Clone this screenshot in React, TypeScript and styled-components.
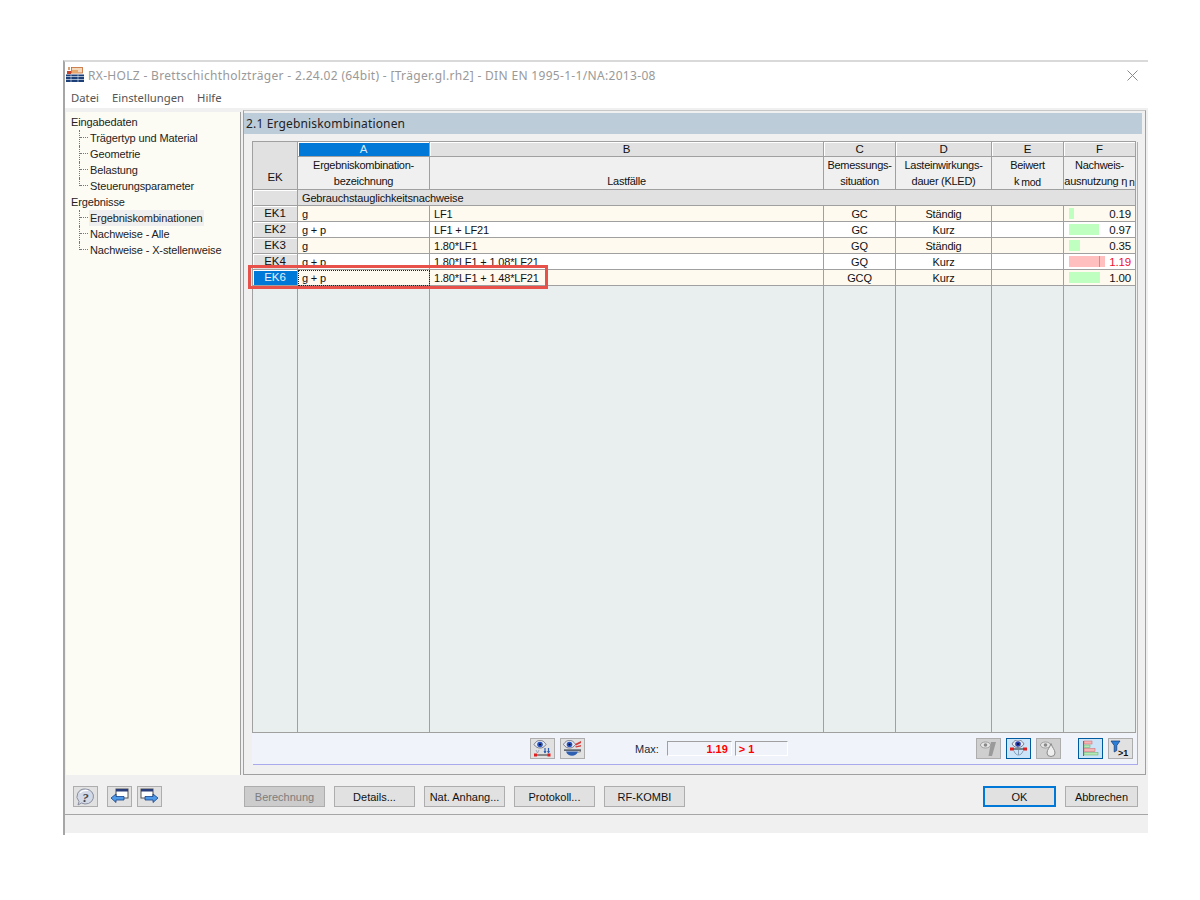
import styled, { createGlobalStyle } from 'styled-components'

const Global = createGlobalStyle`
  html, body { margin: 0; padding: 0; background: #fff; }
  body { font-family: "Liberation Sans", Arial, sans-serif; font-size: 11px; color: #111; }
`

const Page = styled.div`
  width: 1200px;
  height: 900px;
  padding: 60px 0 0 63px;
  box-sizing: border-box;
`
const Win = styled.div`
  width: 1085px;
  height: 775px;
  box-sizing: border-box;
  border-top: 2px solid #d9d9d9;
  border-left: 2px solid #a6a6a6;
  display: flex;
  flex-direction: column;
  background: #f0f0f0;
`
const TitleBar = styled.div`
  height: 26px;
  flex: none;
  background: #fff;
  display: flex;
  align-items: center;
  padding: 0 10px 0 1px;
  gap: 4px;
  font-family: "Noto Sans", sans-serif;
  font-size: 12px;
  letter-spacing: 0.32px;
  color: #999;
`
const TitleText = styled.span`
  flex: 1;
  white-space: nowrap;
`
const MenuBar = styled.div`
  height: 20px;
  flex: none;
  background: #fff;
  display: flex;
  align-items: center;
  gap: 13px;
  padding: 0 0 2px 6px;
  box-sizing: border-box;
  font-family: "Noto Sans", sans-serif;
  font-size: 11.3px;
  color: #555;
`
const Body = styled.div`
  height: 667px;
  flex: none;
  box-sizing: border-box;
  display: flex;
  padding: 2px 2px 0 1px;
  gap: 2px;
`
const Tree = styled.div`
  width: 175px;
  flex: none;
  margin-top: 2px;
  box-sizing: border-box;
  padding: 2px 0 0 5px;
  background: #fdfcf4;
  border-right: 1px solid #a0a0a0;
  color: #222;
  font-size: 11px;
  letter-spacing: -0.12px;
`
const TreeHead = styled.div`
  height: 16px;
  line-height: 16px;
`
const TreeKids = styled.div`
  margin-left: 8px;
`
const TreeRow = styled.div`
  display: flex;
  height: 16px;
  line-height: 16px;
`
const Connector = styled.span<{ $last?: boolean }>`
  width: 10px;
  height: ${(p) => (p.$last ? '8px' : '16px')};
  flex: none;
  border-left: 1px dotted #777;
  box-sizing: border-box;
  position: relative;
  &::after {
    content: '';
    position: absolute;
    left: 0;
    top: 7px;
    width: 8px;
    border-top: 1px dotted #777;
  }
`
const TreeLabel = styled.span<{ $sel?: boolean }>`
  padding: 0 2px 0 1px;
  white-space: nowrap;
  background: ${(p) => (p.$sel ? '#efefef' : 'transparent')};
`
const Panel = styled.div`
  flex: 1;
  box-sizing: border-box;
  border: 1px solid #a0a0a0;
  border-top-color: #c8c8c8;
  padding: 2px 3px 9px 0;
  display: flex;
  flex-direction: column;
`
const SectionTitle = styled.div`
  height: 21px;
  flex: none;
  background: #bdccd9;
  padding-left: 2px;
  font-family: "Noto Sans", sans-serif;
  font-size: 12px;
  letter-spacing: 0.16px;
  line-height: 21px;
  color: #222;
`
const TableFrame = styled.div`
  position: relative;
  margin: 8px 0 0 9px;
  width: 885px;
  flex: 1;
  box-sizing: border-box;
  border-right: 1px solid #a9a9ee;
  border-bottom: 1px solid #a9a9ee;
  display: flex;
  flex-direction: column;
`
const Grid = styled.div`
  flex: 1;
  width: 883px;
  display: grid;
  grid-template-columns: 45px 132px 394px 72px 96px 72px 72px;
  grid-template-rows: 15px 33px 16px repeat(5, 16px) 1fr;
  border-top: 1px solid #a0a0a0;
  border-left: 1px solid #a0a0a0;
  margin-left: -1px;
  margin-top: -1px;
  font-size: 11px;
  letter-spacing: -0.16px;
`
const Cell = styled.div<{ $bg?: string; $align?: string }>`
  box-sizing: border-box;
  border-right: 1px solid #a0a0a0;
  border-bottom: 1px solid #a0a0a0;
  background: ${(p) => p.$bg ?? '#f0f0f0'};
  text-align: ${(p) => p.$align ?? 'center'};
  line-height: 16px;
  padding: 0 4px;
  white-space: nowrap;
  overflow: hidden;
  min-width: 0;
`
const Corner = styled(Cell)`
  grid-row: span 2;
  background: #e1e1e1;
  padding-top: 27px;
  font-size: 11.5px;
`
const ColLetter = styled.div<{ $on?: boolean }>`
  box-sizing: border-box;
  border-right: 1px solid #a0a0a0;
  border-bottom: 1px solid #a0a0a0;
  background: ${(p) => (p.$on ? '#0078d7' : '#e1e1e1')};
  color: ${(p) => (p.$on ? '#dbe9f6' : '#111')};
  box-shadow: inset 1px 1px 0 #fff;
  font-size: 11.5px;
  line-height: 15px;
  text-align: center;
`
const HeadCell = styled(Cell)`
  line-height: 16px;
  padding: 0;
  background: #f0f0f0;
  letter-spacing: -0.28px;
`
const GroupBtn = styled.div`
  box-sizing: border-box;
  border-right: 1px solid #a0a0a0;
  border-bottom: 1px solid #a0a0a0;
  background: #e1e1e1;
  box-shadow: inset 1px 1px 0 #fff;
`
const GroupCell = styled(Cell)`
  grid-column: span 6;
  background: #e1e1e1;
  padding: 0 4px;
`
const RowBtn = styled.div<{ $on?: boolean }>`
  box-sizing: border-box;
  border: 1px solid #a0a0a0;
  border-width: 0 1px 1px 0;
  background: ${(p) => (p.$on ? '#0078d7' : '#e1e1e1')};
  color: ${(p) => (p.$on ? '#e6f1fb' : '#111')};
  box-shadow: inset 1px 1px 0 #fff;
  font-size: 11.5px;
  line-height: 15px;
  text-align: center;
`
const FocusCell = styled(Cell)`
  outline: 1px dotted #222;
  outline-offset: -1px;
`
const EtaCell = styled(Cell)<{ $red?: boolean }>`
  position: relative;
  padding: 0 4px 0 0;
  color: ${(p) => (p.$red ? '#ee1133' : '#111')};
  font-size: 11.5px;
  letter-spacing: -0.15px;
`
const EtaValue = styled.span`
  position: relative;
`
const Bar = styled.span<{ $red?: boolean }>`
  position: absolute;
  left: 5px;
  top: 2px;
  height: 11px;
  background: ${(p) => (p.$red ? '#ffbfbf' : '#bfffbf')};
`
const Tick = styled.span`
  position: absolute;
  left: 30px;
  top: 0;
  bottom: 0;
  width: 1px;
  background: #a0a0a0;
`
const EmptyCell = styled(Cell)`
  background: #e9eeee;
`
const Highlight = styled.div`
  position: absolute;
  left: -5px;
  top: 123px;
  width: 300px;
  height: 24px;
  box-sizing: border-box;
  border: 3px solid #e8504a;
  pointer-events: none;
`
const Sub = styled.span`
  font-size: 10.5px;
  margin-left: 2px;
  position: relative;
  top: 1px;
`
const TableFooter = styled.div`
  height: 31px;
  flex: none;
  background: #f0f4fa;
  display: flex;
  align-items: center;
  padding: 0 2px 0 278px;
  margin-left: -1px;
`
const IconBtn = styled.button<{ $on?: boolean; $dim?: boolean }>`
  width: 25px;
  height: 21px;
  box-sizing: border-box;
  flex: none;
  padding: 0;
  display: flex;
  align-items: center;
  justify-content: center;
  border: ${(p) => (p.$on ? '1px solid #005a9e' : '1px solid #adadad')};
  background: ${(p) => (p.$on ? '#cce4f7' : p.$dim ? '#cfcfcf' : '#e1e1e1')};
`
const Gap = styled.span<{ $w: number }>`
  width: ${(p) => p.$w}px;
  flex: none;
`
const MaxLabel = styled.span`
  margin: 0 8px 0 50px;
  color: #1a2a3a;
`
const ValueBox = styled.div<{ $w: number; $align: string }>`
  width: ${(p) => p.$w}px;
  height: 15px;
  box-sizing: border-box;
  border-top: 1px solid #a0a0a0;
  border-left: 1px solid #a0a0a0;
  border-right: 1px solid #fff;
  border-bottom: 1px solid #fff;
  color: #ff0000;
  font-weight: bold;
  line-height: 14px;
  text-align: ${(p) => p.$align};
  padding: 0 3px 0 3px;
`
const Bottom = styled.div`
  height: 40px;
  flex: none;
  display: flex;
  align-items: flex-start;
  padding: 11px 9px 0 8px;
  border-bottom: 1px solid #a6a6a6;
  box-sizing: border-box;
`
const Btn = styled.button<{ $off?: boolean; $def?: boolean }>`
  width: ${(p) => (p.$def ? '73px' : '81px')};
  height: 21px;
  flex: none;
  box-sizing: border-box;
  padding: 0;
  font: 11px "Liberation Sans", Arial, sans-serif;
  color: ${(p) => (p.$off ? '#7d7d7d' : '#111')};
  background: ${(p) => (p.$off ? '#cccccc' : '#e1e1e1')};
  border: ${(p) => (p.$def ? '2px solid #0078d7' : '1px solid #adadad')};
`
const BtnAlt = styled(Btn)`
  width: 73px;
`
const Status = styled.div`
  flex: 1;
  background: #f0f0f0;
  border-bottom: 2px solid #fff;
`

const Eye = ({ x = 8, y = 6, c = '#2a55c0' }: { x?: number; y?: number; c?: string }) => (
  <>
    <path d={`M${x - 6} ${y}c2-3.500 4-4 6-4s4 .5 6 4c-2 3-4 3.500-6 3.500s-4-.5-6-3.500z`} fill="#e4e9f2" stroke="#556" strokeWidth="0.7" />
    <circle cx={x} cy={y} r="2.800" fill={c} />
    <circle cx={x} cy={y} r="1.100" fill="#0c1020" />
  </>
)

const IconEyeMoment = () => (
  <svg width="19" height="17" viewBox="0 0 19 17">
    <Eye x={7} y={4.5} />
    <path d="M12 8v5M15.500 8v5" stroke="#2f5fb0" strokeWidth="1.200" />
    <path d="M10.500 11l1.500 2.500 1.500-2.500zM14 11l1.500 2.500 1.500-2.500z" fill="#2f5fb0" />
    <path d="M3 10l1.500 3M6 10l-1.500 3" stroke="#8a9ab8" strokeWidth="0.800" />
    <path d="M3 15h12" stroke="#333" strokeWidth="1" />
    <rect x="1" y="13.500" width="3" height="3" fill="#e02020" />
    <rect x="14.500" y="13.500" width="3" height="3" fill="#e02020" />
  </svg>
)
const IconEyeSection = () => (
  <svg width="19" height="17" viewBox="0 0 19 17">
    <Eye x={6.500} y={4.500} />
    <path d="M12 4l6-3v2l-5 2.500zM12 6.500l6-1.500v1.500l-5 1z" fill="#d63c3c" />
    <path d="M1 9.500h17v1.200H1z" fill="#26303e" />
    <path d="M3 11.500h12c-1 3-3.500 4.200-6 4.200s-5-1.200-6-4.200z" fill="#2f5fb0" />
    <path d="M14 12.500l4-1" stroke="#888" />
  </svg>
)
const IconEyeWedge = () => (
  <svg width="19" height="17" viewBox="0 0 19 17">
    <ellipse cx="6.500" cy="5" rx="5" ry="3" fill="#e6e6e6" stroke="#8a8a8a" strokeWidth="0.7" />
    <circle cx="6.500" cy="5" r="1.800" fill="#8a8a8a" />
    <path d="M12 2h5l-4 14h-3.500z" fill="#9a9a9a" />
  </svg>
)
const IconEyeBeam = () => (
  <svg width="19" height="17" viewBox="0 0 19 17">
    <Eye x={9} y={4} c="#2a3fb0" />
    <path d="M3 9h13" stroke="#222" strokeWidth="1" />
    <rect x="1" y="7.500" width="4" height="3" fill="#e02020" />
    <rect x="14" y="7.500" width="4" height="3" fill="#e02020" />
    <path d="M5 11c1 3 3 4 4.500 4s3.500-1 4.500-4M9.500 10v5" fill="none" stroke="#8aa0b8" />
  </svg>
)
const IconEyeDrop = () => (
  <svg width="19" height="17" viewBox="0 0 19 17">
    <ellipse cx="6.500" cy="5" rx="5" ry="3" fill="#e6e6e6" stroke="#8a8a8a" strokeWidth="0.7" />
    <circle cx="6.500" cy="5" r="1.800" fill="#8a8a8a" />
    <path d="M12 3.500c1 4 4 6 4 9.500a4 3.500 0 0 1-8 0c0-3.500 3-5.500 4-9.500z" fill="#eee" stroke="#8a8a8a" />
  </svg>
)
const IconBars = () => (
  <svg width="17" height="17" viewBox="0 0 17 17">
    <path d="M1.500 1v15" stroke="#666" />
    <rect x="2" y="1" width="8" height="3" fill="#f5b5b5" stroke="#c66" strokeWidth="0.5" />
    <rect x="2" y="5" width="6" height="2.500" fill="#b5e8b5" stroke="#6a6" strokeWidth="0.5" />
    <rect x="2" y="8.500" width="11" height="3" fill="#f5b5b5" stroke="#c66" strokeWidth="0.5" />
    <rect x="2" y="12.500" width="14" height="2.500" fill="#b5e8b5" stroke="#6a6" strokeWidth="0.5" />
  </svg>
)
const IconFilter = () => (
  <svg width="21" height="17" viewBox="0 0 21 17">
    <path d="M1 1h9L6.800 5.500v5L4.200 12V5.500z" fill="#2b7fd8" stroke="#123a78" strokeWidth="0.7" />
    <text x="8" y="15.500" fontSize="9" fontWeight="bold" fontFamily="Liberation Sans" fill="#111">&gt;1</text>
  </svg>
)
const IconHelp = () => (
  <svg width="19" height="18" viewBox="0 0 19 18">
    <path d="M9.500 1a8 7.500 0 1 1-4 14L2 17l1-3.500A8 7.500 0 0 1 9.500 1z" fill="#d3d9e6" stroke="#8a8fa0" />
    <path d="M4 5c2-2.500 5-3 8-2.500" fill="none" stroke="#fff" strokeWidth="1.200" />
    <text x="9.500" y="13.500" textAnchor="middle" fontSize="13" fontStyle="italic" fontWeight="bold" fontFamily="Liberation Serif" fill="#444">?</text>
  </svg>
)
const IconWinArrow = ({ back }: { back?: boolean }) => (
  <svg width="19" height="17" viewBox="0 0 19 17">
    <rect x={back ? 6 : 1} y="1" width="12" height="9" fill="#fff" stroke="#555" />
    <rect x={back ? 6 : 1} y="1" width="12" height="2.500" fill="#2a3f7a" />
    {back ? (
      <path d="M1 10l5-4v2.500h8v3.500H6v2.500z" fill="#4f9ae8" stroke="#12408a" strokeWidth="0.8" />
    ) : (
      <path d="M18 10l-5-4v2.500H5v3.500h8v2.500z" fill="#4f9ae8" stroke="#12408a" strokeWidth="0.8" />
    )}
  </svg>
)
const AppIcon = () => (
  <svg width="18" height="16" viewBox="0 0 18 16">
    <rect x="2" y="0" width="2" height="3" fill="#d8a070" />
    <rect x="5.500" y="0.500" width="11" height="5.500" fill="#f4d8bc" stroke="#c0672b" strokeWidth="0.8" />
    <path d="M6 3h6v3H6z" fill="#e8a86c" />
    <rect x="1" y="4" width="4" height="3" fill="#c6432c" />
    <path d="M0 7.500h18V15H0z" fill="#1d3f78" />
    <path d="M0 9.500h18M0 12.500h18" stroke="#dfe8f4" strokeWidth="0.7" />
    <path d="M5 7.500v7.500M12 7.500v7.500" stroke="#dfe8f4" strokeWidth="0.6" />
  </svg>
)
const CloseIcon = () => (
  <svg width="11" height="11" viewBox="0 0 11 11">
    <path d="M0.500 0.500l10 10M10.500 0.500l-10 10" stroke="#8a8a8a" strokeWidth="1" />
  </svg>
)

const ROWS = [
  { ek: 'EK1', name: 'g', lf: 'LF1', sit: 'GC', kled: 'Ständig', eta: 0.19, w: 5 },
  { ek: 'EK2', name: 'g + p', lf: 'LF1 + LF21', sit: 'GC', kled: 'Kurz', eta: 0.97, w: 30 },
  { ek: 'EK3', name: 'g', lf: '1.80*LF1', sit: 'GQ', kled: 'Ständig', eta: 0.35, w: 11 },
  { ek: 'EK4', name: 'g + p', lf: '1.80*LF1 + 1.08*LF21', sit: 'GQ', kled: 'Kurz', eta: 1.19, w: 36 },
  { ek: 'EK6', name: 'g + p', lf: '1.80*LF1 + 1.48*LF21', sit: 'GCQ', kled: 'Kurz', eta: 1.0, w: 31 },
]

export default function App() {
  return (
    <Page>
      <Global />
      <Win>
        <TitleBar>
          <AppIcon />
          <TitleText>RX-HOLZ - Brettschichtholzträger - 2.24.02 (64bit) - [Träger.gl.rh2] - DIN EN 1995-1-1/NA:2013-08</TitleText>
          <CloseIcon />
        </TitleBar>
        <MenuBar>
          <span>Datei</span>
          <span>Einstellungen</span>
          <span>Hilfe</span>
        </MenuBar>
        <Body>
          <Tree>
            <TreeHead>Eingabedaten</TreeHead>
            <TreeKids>
              <TreeRow><Connector /><TreeLabel>Trägertyp und Material</TreeLabel></TreeRow>
              <TreeRow><Connector /><TreeLabel>Geometrie</TreeLabel></TreeRow>
              <TreeRow><Connector /><TreeLabel>Belastung</TreeLabel></TreeRow>
              <TreeRow><Connector $last /><TreeLabel>Steuerungsparameter</TreeLabel></TreeRow>
            </TreeKids>
            <TreeHead>Ergebnisse</TreeHead>
            <TreeKids>
              <TreeRow><Connector /><TreeLabel $sel>Ergebniskombinationen</TreeLabel></TreeRow>
              <TreeRow><Connector /><TreeLabel>Nachweise - Alle</TreeLabel></TreeRow>
              <TreeRow><Connector $last /><TreeLabel>Nachweise - X-stellenweise</TreeLabel></TreeRow>
            </TreeKids>
          </Tree>
          <Panel>
            <SectionTitle>2.1 Ergebniskombinationen</SectionTitle>
            <TableFrame>
              <Grid>
                <Corner>EK</Corner>
                <ColLetter $on>A</ColLetter>
                <ColLetter>B</ColLetter>
                <ColLetter>C</ColLetter>
                <ColLetter>D</ColLetter>
                <ColLetter>E</ColLetter>
                <ColLetter>F</ColLetter>

                <HeadCell>Ergebniskombination-<br />bezeichnung</HeadCell>
                <HeadCell><br />Lastfälle</HeadCell>
                <HeadCell>Bemessungs-<br />situation</HeadCell>
                <HeadCell>Lasteinwirkungs-<br />dauer (KLED)</HeadCell>
                <HeadCell>Beiwert<br />k<Sub>mod</Sub></HeadCell>
                <HeadCell>Nachweis-<br />ausnutzung η<Sub>n</Sub></HeadCell>

                <GroupBtn />
                <GroupCell $align="left">Gebrauchstauglichkeitsnachweise</GroupCell>

                {ROWS.map((r, i) => {
                  const bg = i % 2 === 0 ? '#fffaf0' : '#ffffff'
                  const last = i === ROWS.length - 1
                  const over = r.eta > 1
                  const NameCell = last ? FocusCell : Cell
                  return [
                    <RowBtn key={r.ek} $on={last}>{r.ek}</RowBtn>,
                    <NameCell key={r.ek + 'a'} $bg={bg} $align="left">{r.name}</NameCell>,
                    <Cell key={r.ek + 'b'} $bg={bg} $align="left">{r.lf}</Cell>,
                    <Cell key={r.ek + 'c'} $bg={bg}>{r.sit}</Cell>,
                    <Cell key={r.ek + 'd'} $bg={bg}>{r.kled}</Cell>,
                    <Cell key={r.ek + 'e'} $bg={bg} />,
                    <EtaCell key={r.ek + 'f'} $bg={bg} $align="right" $red={over}>
                      <Bar $red={over} style={{ width: r.w }}>{over ? <Tick /> : null}</Bar>
                      <EtaValue>{r.eta.toFixed(2)}</EtaValue>
                    </EtaCell>,
                  ]
                })}

                <EmptyCell />
                <EmptyCell />
                <EmptyCell />
                <EmptyCell />
                <EmptyCell />
                <EmptyCell />
                <EmptyCell />
              </Grid>
              <TableFooter>
                <IconBtn><IconEyeMoment /></IconBtn>
                <Gap $w={5} />
                <IconBtn><IconEyeSection /></IconBtn>
                <MaxLabel>Max:</MaxLabel>
                <ValueBox $w={65} $align="right">1.19</ValueBox>
                <Gap $w={3} />
                <ValueBox $w={53} $align="left">&gt; 1</ValueBox>
                <Gap $w={188} />
                <IconBtn $dim><IconEyeWedge /></IconBtn>
                <Gap $w={5} />
                <IconBtn $on><IconEyeBeam /></IconBtn>
                <Gap $w={5} />
                <IconBtn $dim><IconEyeDrop /></IconBtn>
                <Gap $w={17} />
                <IconBtn $on><IconBars /></IconBtn>
                <Gap $w={5} />
                <IconBtn><IconFilter /></IconBtn>
              </TableFooter>
              <Highlight />
            </TableFrame>
          </Panel>
        </Body>
        <Bottom>
          <IconBtn><IconHelp /></IconBtn>
          <Gap $w={9} />
          <IconBtn><IconWinArrow back /></IconBtn>
          <Gap $w={5} />
          <IconBtn><IconWinArrow /></IconBtn>
          <Gap $w={82} />
          <Btn $off>Berechnung</Btn>
          <Gap $w={9} />
          <Btn>Details...</Btn>
          <Gap $w={9} />
          <Btn>Nat. Anhang...</Btn>
          <Gap $w={9} />
          <Btn>Protokoll...</Btn>
          <Gap $w={9} />
          <Btn>RF-KOMBI</Btn>
          <Gap $w={298} />
          <Btn $def>OK</Btn>
          <Gap $w={9} />
          <BtnAlt>Abbrechen</BtnAlt>
        </Bottom>
        <Status />
      </Win>
    </Page>
  )
}
